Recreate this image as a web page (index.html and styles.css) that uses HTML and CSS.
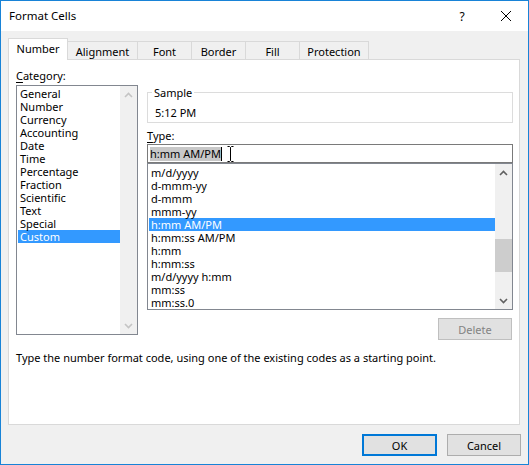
FILE: index.html
```html
<!DOCTYPE html>
<html>
<head>
<meta charset="utf-8">
<title>Format Cells</title>
<link rel="stylesheet" href="styles.css">
</head>
<body>
<div class="window">
  <div class="titlebar">
    <span class="title">Format Cells</span>
    <span class="help">?</span>
    <span class="close"><svg width="12" height="12" viewBox="0 0 12 12"><path d="M1 1 L11 11 M11 1 L1 11" stroke="#000" stroke-width="1" fill="none"/></svg></span>
  </div>
  <div class="body">
    <div class="tabs">
      <div class="tab active t-number">Number</div>
      <div class="tab t-align">Alignment</div>
      <div class="tab t-font">Font</div>
      <div class="tab t-border">Border</div>
      <div class="tab t-fill">Fill</div>
      <div class="tab t-prot">Protection</div>
    </div>
    <div class="panel">
      <div class="columns">
        <div class="left">
          <div class="label"><u>C</u>ategory:</div>
          <div class="listbox catlist">
            <ul class="items">
              <li>General</li>
              <li>Number</li>
              <li>Currency</li>
              <li>Accounting</li>
              <li>Date</li>
              <li>Time</li>
              <li>Percentage</li>
              <li>Fraction</li>
              <li>Scientific</li>
              <li>Text</li>
              <li>Special</li>
              <li class="selected">Custom</li>
            </ul>
            <div class="vscroll disabled">
              <div class="arrow"><svg width="9" height="6" viewBox="0 0 9 6"><path d="M1 5 L4.5 1.5 L8 5" stroke="currentColor" stroke-width="1.6" fill="none"/></svg></div>
              <div class="track"></div>
              <div class="arrow"><svg width="9" height="6" viewBox="0 0 9 6"><path d="M1 1 L4.5 4.5 L8 1" stroke="currentColor" stroke-width="1.6" fill="none"/></svg></div>
            </div>
          </div>
        </div>
        <div class="right">
          <fieldset class="sample">
            <legend>Sample</legend>
            <div class="sample-val">5:12 PM</div>
          </fieldset>
          <div class="label type-label"><u>T</u>ype:</div>
          <div class="input">
            <span class="sel">h:mm AM/PM</span><span class="caret"></span>
            <svg class="ibeam" width="7" height="16" viewBox="0 0 7 16"><path d="M0.5 0.5 H2.5 L3.5 1.5 L4.5 0.5 H6.5 M3.5 1.5 V14.5 M0.5 15.5 H2.5 L3.5 14.5 L4.5 15.5 H6.5" stroke="#000" stroke-width="1" fill="none"/></svg>
          </div>
          <div class="listbox typelist">
            <ul class="items">
              <li>m/d/yyyy</li>
              <li>d-mmm-yy</li>
              <li>d-mmm</li>
              <li>mmm-yy</li>
              <li class="selected">h:mm AM/PM</li>
              <li>h:mm:ss AM/PM</li>
              <li>h:mm</li>
              <li>h:mm:ss</li>
              <li>m/d/yyyy h:mm</li>
              <li>mm:ss</li>
              <li>mm:ss.0</li>
            </ul>
            <div class="vscroll">
              <div class="arrow"><svg width="9" height="6" viewBox="0 0 9 6"><path d="M1 5 L4.5 1.5 L8 5" stroke="currentColor" stroke-width="1.6" fill="none"/></svg></div>
              <div class="track"><div class="thumb"></div></div>
              <div class="arrow"><svg width="9" height="6" viewBox="0 0 9 6"><path d="M1 1 L4.5 4.5 L8 1" stroke="currentColor" stroke-width="1.6" fill="none"/></svg></div>
            </div>
          </div>
          <div class="delete-row"><button class="btn btn-disabled">Delete</button></div>
        </div>
      </div>
      <p class="desc">Type the number format code, using one of the existing codes as a starting point.</p>
    </div>
    <div class="footer">
      <button class="btn btn-default">OK</button>
      <button class="btn">Cancel</button>
    </div>
  </div>
</div>
</body>
</html>
```

FILE: styles.css
```css
* { box-sizing: border-box; }
html, body { margin: 0; padding: 0; background: #fff; }
body {
  font-family: "Noto Sans", "Open Sans", sans-serif;
  font-size: 11px;
  color: #000;
}
.window {
  width: 529px;
  height: 465px;
  border: 1px solid #1883d7;
  background: #f0f0f0;
  display: flex;
  flex-direction: column;
}
.titlebar {
  height: 30px;
  background: #fff;
  display: flex;
  align-items: center;
  padding-left: 8px;
}
.title { flex: 1; font-size: 11.5px; line-height: 14px; }
.help { width: 10px; text-align: center; margin-right: 33px; font-size: 12px; }
.close { width: 12px; height: 12px; display: flex; margin-right: 16px; }
.body {
  flex: 1;
  display: flex;
  flex-direction: column;
  padding-top: 7px;
}
.tabs {
  display: flex;
  align-items: flex-end;
  margin-left: 7px;
  height: 21px;
}
.tab {
  height: 18px;
  border: 1px solid #d9d9d9;
  border-bottom: none;
  background: #f0f0f0;
  margin-left: -1px;
  display: flex;
  align-items: center;
  justify-content: center;
  line-height: 13px;
  padding-top: 1px;
}
.tab.active {
  height: 22px;
  margin-left: 0;
  margin-bottom: -1px;
  background: #fff;
  position: relative;
  z-index: 1;
  padding-top: 0;
  padding-bottom: 2px;
}
.t-number { width: 60px; }
.t-align { width: 71px; }
.t-font { width: 55px; }
.t-border { width: 55px; }
.t-fill { width: 55px; }
.t-prot { width: 70px; }
.panel {
  margin: 0 8px 0 7px;
  height: 366px;
  border: 1px solid #d9d9d9;
  background: #fff;
  padding: 9px 6px 0 7px;
}
.columns {
  display: flex;
  gap: 9px;
}
.left { width: 122px; }
.right { width: 366px; }
.label { line-height: 13px; height: 13px; }
.label u { text-decoration-thickness: 1px; text-underline-offset: 2px; }
.listbox {
  border: 1px solid #828790;
  display: flex;
  background: #fff;
  overflow: hidden;
}
.catlist { margin-top: 3px; height: 250px; }
.items {
  list-style: none;
  margin: 0;
  padding: 1px 0 0 1px;
  flex: 1;
  overflow: hidden;
}
.items li {
  height: 13px;
  line-height: 13px;
  padding-left: 2px;
  white-space: nowrap;
}
.items li.selected { background: #3399ff; color: #fff; }
.vscroll {
  width: 17px;
  background: #f0f0f0;
  display: flex;
  flex-direction: column;
  color: #606060;
}
.vscroll.disabled { color: #c4c4c4; }
.vscroll .arrow {
  height: 17px;
  display: flex;
  align-items: center;
  justify-content: center;
}
.vscroll .track { flex: 1; position: relative; }
.thumb {
  margin-top: 58px;
  height: 33px;
  background: #cdcdcd;
}
.sample {
  margin: 17px 0 0 0;
  padding: 0 4px 3px 4px;
  border: 1px solid #dcdcdc;
  min-width: 0;
}
.sample legend {
  padding: 0 2px;
  line-height: 13px;
}
.sample-val { line-height: 13px; margin-top: 7px; padding-left: 3px; }
.type-label { margin-top: 6px; }
.input {
  margin-top: 2px;
  height: 19px;
  border: 1px solid #7a7a7a;
  display: flex;
  align-items: center;
  padding-left: 2px;
}
.sel { background: #c8c8c8; line-height: 14px; }
.caret { width: 1px; height: 14px; background: #000; }
.ibeam { margin-left: 5px; }
.typelist { height: 147px; }
.typelist .items { padding-top: 2px; }
.delete-row { display: flex; justify-content: flex-end; margin-top: 8px; padding-right: 1px; }
.btn {
  font-family: inherit;
  font-size: 11px;
  height: 22px;
  width: 74px;
  background: #e1e1e1;
  border: 1px solid #adadad;
  color: #000;
  padding: 0;
  margin: 0;
}
.btn-disabled { background: #e1e1e1; border-color: #bfbfbf; color: #838383; }
.btn-default { border: 2px solid #0078d7; width: 75px; }
.desc { margin: 11px 0 0 0; line-height: 13px; }
.footer {
  display: flex;
  justify-content: flex-end;
  gap: 10px;
  padding: 9px 7px 0 0;
}
```
